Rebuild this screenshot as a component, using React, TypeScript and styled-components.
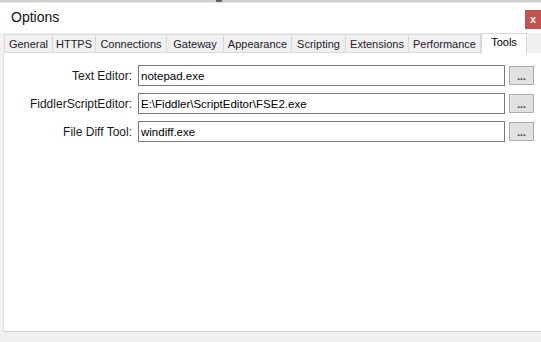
import React from "react";
import styled, { createGlobalStyle } from "styled-components";

const GlobalStyle = createGlobalStyle`
  html, body {
    margin: 0;
    padding: 0;
    background: #f0f0f0;
  }
  body {
    font-family: "Liberation Sans", Arial, sans-serif;
    overflow: hidden;
  }
`;

const Window = styled.div`
  width: 541px;
  height: 342px;
  display: flex;
  flex-direction: column;
  background: #f0f0f0;
  box-sizing: border-box;
`;

const TopStrip = styled.div`
  height: 3px;
  background: linear-gradient(to right, #cfcfcf 0 40%, #6d5a73 40% 41%, #cfcfcf 41% 100%);
  border-bottom: 1px solid #e4e4e4;
  box-sizing: border-box;
`;

const TitleBar = styled.div`
  height: 30px;
  background: #ffffff;
  display: flex;
  justify-content: space-between;
  align-items: flex-start;
`;

const Title = styled.h1`
  margin: 0;
  padding: 6px 0 0 11px;
  font-size: 14px;
  font-weight: normal;
  color: #111111;
`;

const CloseButton = styled.button`
  margin-top: 7px;
  width: 16px;
  height: 19px;
  padding: 0;
  border: none;
  background: #c75050;
  color: #ffffff;
  font-family: "Liberation Sans", Arial, sans-serif;
  font-size: 11px;
  font-weight: bold;
  line-height: 17px;
`;

const TabStrip = styled.div`
  height: 20px;
  display: flex;
  align-items: flex-end;
  padding-left: 4px;
  position: relative;
  z-index: 1;
`;

const Tab = styled.div<{ $width: number; $active?: boolean }>`
  width: ${(p) => p.$width}px;
  height: ${(p) => (p.$active ? 21 : 19)}px;
  margin-bottom: ${(p) => (p.$active ? -1 : 0)}px;
  box-sizing: border-box;
  border: 1px solid #d9d9d9;
  border-left-width: ${(p) => (p.$active ? 1 : 0)}px;
  border-bottom: ${(p) => (p.$active ? "none" : "1px solid #d9d9d9")};
  background: ${(p) => (p.$active ? "#ffffff" : "#f0f0f0")};
  font-size: 11px;
  color: ${(p) => (p.$active ? "#000000" : "#1c1c2e")};
  display: flex;
  align-items: ${(p) => (p.$active ? "flex-start" : "center")};
  padding-top: ${(p) => (p.$active ? 2 : 0)}px;
  justify-content: center;

  &:first-child {
    border-left-width: 1px;
  }
`;

const Panel = styled.div`
  flex: 1;
  margin-left: 3px;
  border-left: 1px solid #e2e2e2;
  background: #ffffff;
  border-bottom: 1px solid #d0d0d0;
  padding-top: 12px;
  display: flex;
  flex-direction: column;
  gap: 7px;
`;

const Row = styled.div`
  display: flex;
  align-items: center;
  height: 21px;
`;

const Label = styled.label`
  width: 128px;
  margin-right: 6px;
  text-align: right;
  font-size: 12px;
  color: #1a1a1a;
`;

const PathInput = styled.input`
  width: 367px;
  height: 21px;
  box-sizing: border-box;
  border: 1px solid #7a7a7a;
  padding: 0 2px;
  font-family: "Liberation Sans", Arial, sans-serif;
  font-size: 11.5px;
  color: #000000;
  background: #ffffff;
  outline: none;
`;

const BrowseButton = styled.button`
  margin-left: 4px;
  width: 25px;
  height: 19px;
  box-sizing: border-box;
  border: 1px solid #adadad;
  background: #e1e1e1;
  padding: 0;
  font-family: "Liberation Sans", Arial, sans-serif;
  font-size: 10px;
  font-weight: bold;
  color: #333333;
  line-height: 20px;
`;

const Footer = styled.div`
  height: 10px;
  margin-left: 3px;
  background: #f0f0f0;
`;

const tabs = [
  { name: "General", width: 49 },
  { name: "HTTPS", width: 43 },
  { name: "Connections", width: 71 },
  { name: "Gateway", width: 57 },
  { name: "Appearance", width: 68 },
  { name: "Scripting", width: 54 },
  { name: "Extensions", width: 63 },
  { name: "Performance", width: 72 },
  { name: "Tools", width: 46 },
];

const tools = [
  { label: "Text Editor:", value: "notepad.exe" },
  { label: "FiddlerScriptEditor:", value: "E:\\Fiddler\\ScriptEditor\\FSE2.exe" },
  { label: "File Diff Tool:", value: "windiff.exe" },
];

const App: React.FC = () => {
  return (
    <>
      <GlobalStyle />
      <Window>
        <TopStrip />
        <TitleBar>
          <Title>Options</Title>
          <CloseButton>x</CloseButton>
        </TitleBar>
        <TabStrip>
          {tabs.map((t) => (
            <Tab key={t.name} $width={t.width} $active={t.name === "Tools"}>
              {t.name}
            </Tab>
          ))}
        </TabStrip>
        <Panel>
          {tools.map((t) => (
            <Row key={t.label}>
              <Label>{t.label}</Label>
              <PathInput defaultValue={t.value} />
              <BrowseButton>...</BrowseButton>
            </Row>
          ))}
        </Panel>
        <Footer />
      </Window>
    </>
  );
};

export default App;
